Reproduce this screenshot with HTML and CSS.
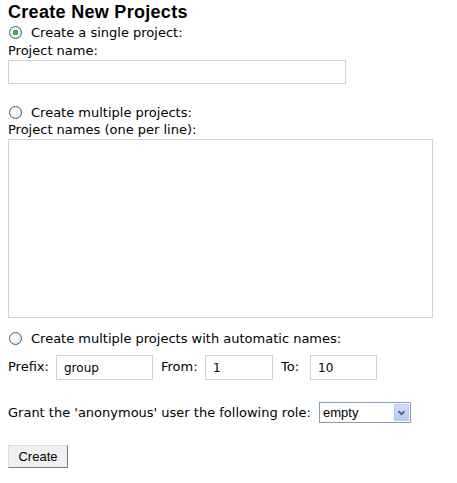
FILE: index.html
```html
<!DOCTYPE html>
<html>
<head>
<meta charset="utf-8">
<title>Create New Projects</title>
<link rel="stylesheet" href="styles.css">
</head>
<body>
<h1 class="title">Create New Projects</h1>
<label class="opt"><input type="radio" name="mode" class="radio" checked>Create a single project:</label>
<div class="lbl">Project name:</div>
<input class="field field-name" type="text">
<label class="opt opt-multi"><input type="radio" name="mode" class="radio">Create multiple projects:</label>
<div class="lbl">Project names (one per line):</div>
<textarea class="area"></textarea>
<label class="opt opt-auto"><input type="radio" name="mode" class="radio">Create multiple projects with automatic names:</label>
<div class="range">
  <span class="rlbl rlbl-prefix">Prefix:</span><input class="field f-prefix" type="text" value="group">
  <span class="rlbl rlbl-from">From:</span><input class="field f-from" type="text" value="1">
  <span class="rlbl rlbl-to">To:</span><input class="field f-to" type="text" value="10">
</div>
<div class="grant">
  <span class="grant-text">Grant the 'anonymous' user the following role:</span>
  <div class="sel">
    <select class="sel-box"><option>empty</option></select>
    <span class="sel-btn"><svg width="15" height="15" viewBox="0 0 15 15"><path d="M4 6 L7.5 9.5 L11 6" fill="none" stroke="#4d6185" stroke-width="2"/></svg></span>
  </div>
</div>
<button class="btn" type="button">Create</button>
</body>
</html>
```
FILE: styles.css
```css
html, body {
  background: #fff;
}
body {
  margin: 0 8px;
  font-family: "DejaVu Sans", Verdana, sans-serif;
  font-size: 13px;
  color: #000;
}
.title {
  margin: 2px 0 0;
  font-family: "Liberation Sans", Arial, sans-serif;
  font-weight: bold;
  font-size: 18px;
  line-height: 20px;
  letter-spacing: 0.3px;
}
.opt {
  display: flex;
  align-items: center;
  height: 17px;
  line-height: 17px;
  margin-top: 2px;
}
.radio {
  -webkit-appearance: none;
  appearance: none;
  box-sizing: border-box;
  width: 13px;
  height: 13px;
  margin: 0 9px 0 1px;
  border: 1px solid #3a6188;
  border-radius: 50%;
  background: radial-gradient(circle at 40% 40%, #ffffff 0, #f3f3ef 45%, #d6d6ce 100%);
}
.radio:checked {
  background: radial-gradient(circle, #46cc46 0, #21a121 2.4px, transparent 3px),
              radial-gradient(circle at 40% 40%, #ffffff 0, #f3f3ef 45%, #d6d6ce 100%);
}
.opt-multi {
  margin-top: 20px;
}
.opt-auto {
  margin-top: 12px;
}
.lbl {
  line-height: 17px;
  margin-top: 1px;
}
.opt-multi + .lbl {
  margin-top: 0;
}
.field {
  box-sizing: border-box;
  border: 1px solid #d2d2d2;
  background: #fff;
  outline: none;
  font-family: "DejaVu Sans", Verdana, sans-serif;
  font-size: 12px;
  color: #000;
  padding: 0 7px;
  margin: 0;
}
.field-name {
  display: block;
  margin-top: 1px;
  width: 338px;
  height: 24px;
}
.area {
  display: block;
  box-sizing: border-box;
  margin: 1px 0 0;
  width: 425px;
  height: 179px;
  border: 1px solid #d2d2d2;
  resize: none;
  outline: none;
}
.range {
  display: flex;
  align-items: center;
  margin-top: 8px;
  height: 25px;
}
.range .field {
  height: 25px;
}
.rlbl {
  padding-bottom: 3px;
}
.rlbl-prefix { width: 48px; }
.rlbl-from { width: 44px; margin-left: 8px; }
.rlbl-to { width: 29px; margin-left: 8px; }
.f-prefix { width: 97px; }
.f-from { width: 68px; }
.f-to { width: 67px; }
.grant {
  display: flex;
  align-items: center;
  margin-top: 22px;
  height: 21px;
}
.grant-text {
  width: 311px;
}
.sel {
  position: relative;
  width: 92px;
  height: 21px;
}
.sel-box {
  -webkit-appearance: none;
  appearance: none;
  box-sizing: border-box;
  width: 92px;
  height: 21px;
  margin: 0;
  padding: 0 0 0 3px;
  border: 1px solid #7f9db9;
  border-radius: 0;
  background: #fff;
  font-family: "Liberation Sans", Arial, sans-serif;
  font-size: 13px;
  color: #000;
  outline: none;
}
.sel-btn {
  position: absolute;
  top: 2px;
  right: 2px;
  width: 15px;
  height: 17px;
  box-sizing: border-box;
  border: 1px solid #b8cbf5;
  background: linear-gradient(#d2defc, #b4c8f6);
  display: flex;
  align-items: center;
  justify-content: center;
}
.sel-btn svg {
  display: block;
}
.btn {
  display: block;
  margin: 22px 0 0;
  box-sizing: border-box;
  width: 60px;
  height: 23px;
  padding: 0;
  font-family: "Liberation Sans", Arial, sans-serif;
  font-size: 13px;
  color: #000;
  background: #f0f0f0;
  border: 1px solid;
  border-color: #dcdcdc #7a7a7a #7a7a7a #dcdcdc;
  border-radius: 0;
}
```
